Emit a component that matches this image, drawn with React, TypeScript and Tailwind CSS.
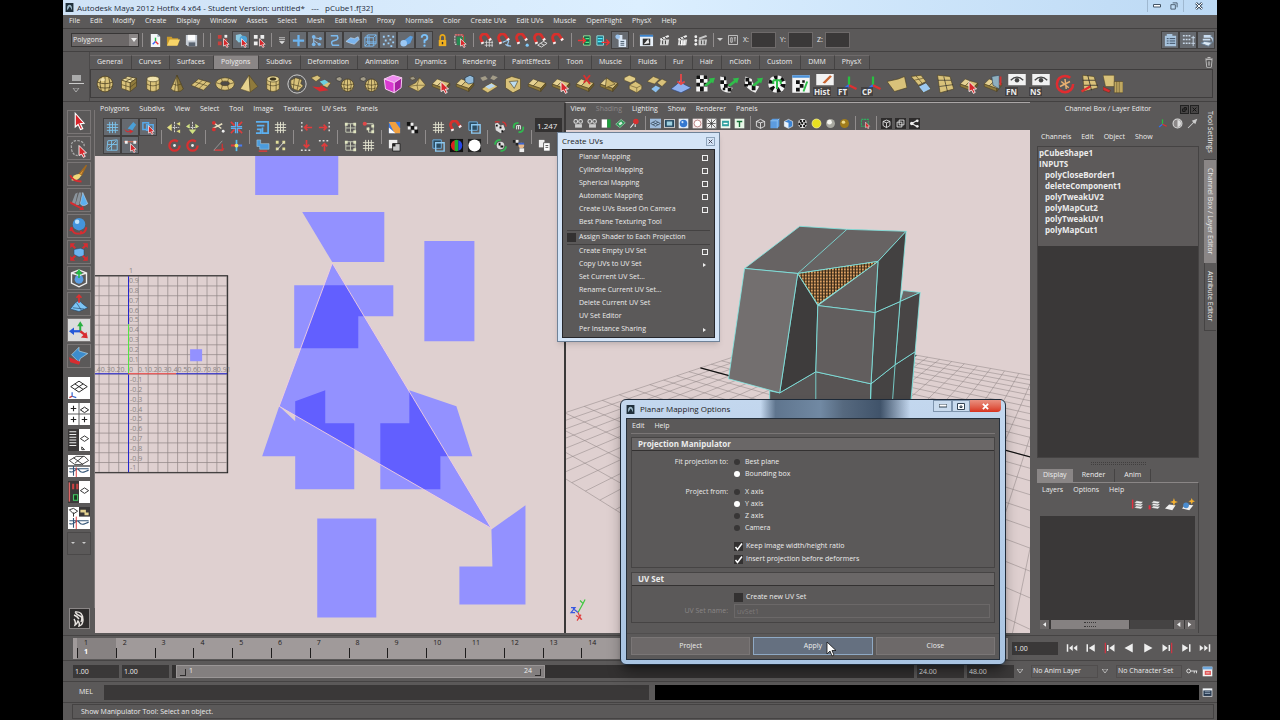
import React from 'react';
import clsx from 'clsx';

const GOLD = '#d9c27a';
const DARK_GOLD = '#8f7a3c';
const EDGE = '#4a3e20';

// Small drawings, all on a 16x16 grid
const redCursor = <path d="M8 6l6 6-2.500.2 1.500 2.500-1.500.8-1.400-2.600L8 14z" fill="#d8282c" stroke="#fff" strokeWidth=".7" />;
const tiles = (
  <g stroke={EDGE} strokeWidth=".4">
    <path d="M1 8l4-4 4 1.500-4 4z" fill="#e6d292" />
    <path d="M9 5.500l6 1.700-4 4.300-6-2z" fill={GOLD} />
    <path d="M1 8l4 1.500 6 2V14L1 10z" fill={DARK_GOLD} />
    <path d="M11 11.500l4-4.300v2L11 14z" fill="#6e5c2a" />
  </g>
);
const checker = (
  <g>
    <path d="M1 1h9v13H1z" fill="#f4f4f4" />
    <path d="M1 1h3v3H1zM7 1h3v3H7zM4 4h3v3H4zM1 7h3v3H1zM7 7h3v3H7zM4 10h3v4H4z" fill="#111" />
  </g>
);
const greenArrow = <path d="M7 9l5-4-1-1.500 5-.5-1.500 4.500-1-1L9 10z" fill="#2fbf4a" />;
const magnet = (
  <g fill="none">
    <path d="M4 11L2 6.500A4 4 0 0 1 9.500 3.500l3 4" stroke="#d8302c" strokeWidth="3" />
    <path d="M3.300 9.600l.8 2M11.200 6l1.300 1.900" stroke="#eee" strokeWidth="3" />
  </g>
);
const axes = (
  <g fill="none" strokeWidth="1.800">
    <path d="M8 9V2" stroke="#28c040" />
    <path d="M8 9l-5 4" stroke="#3070f0" />
    <path d="M8 9l6 3" stroke="#e03030" />
  </g>
);
const clap = (
  <g>
    <path d="M4 7h9l-1 6H3z" fill="#d8d8d8" />
    <path d="M3 6l9-4 1 2-9 4z" fill="#eee" />
    <path d="M5 5.200l2 1.400M8 3.900l2 1.400M6 8v4M9 8v4" stroke="#333" />
  </g>
);
const grid = <path d="M5 2v12M8 2v12M11 2v12M2 5h12M2 8h12M2 11h12" fill="none" />;
const globe = (
  <g>
    <circle cx="8" cy="8" r="6.300" fill={GOLD} stroke={EDGE} strokeWidth=".6" />
    <path d="M2 6.500q6 2.500 12 0M2 10q6 2.500 12 0M8 1.700v12.600M5 2.500q-2 5.500 0 11M11 2.500q2 5.500 0 11" fill="none" stroke={EDGE} strokeWidth=".6" />
    <ellipse cx="6" cy="4.500" rx="2" ry="1.300" fill="#f6e9b8" opacity=".8" />
  </g>
);
const smallGlobe = (
  <g>
    <path d="M1 3l3-1 2 2-2 2-3-1z" fill="#a39c88" stroke="#333" strokeWidth=".5" />
    <circle cx="10" cy="9" r="5" fill={GOLD} stroke={EDGE} strokeWidth=".6" />
    <path d="M5 8q5 2 10 0M5.500 11q5 2 9 0M10 4v10M8 4.500q-2 4.500 0 9M12 4.500q2 4.500 0 9" fill="none" stroke={EDGE} strokeWidth=".5" />
  </g>
);
const persp = (
  <g fill="none" stroke="#222" strokeWidth=".7">
    <path d="M2 7l6-4 6 4-6 4zM5 5l6 4M11 5L5 9" />
  </g>
);
const wave = <path d="M1 10h14M4 8v7M1 12c4 2 5-4 7-1s4 1 7 0" fill="none" stroke="#357" strokeWidth=".8" />;
const stack = (
  <g fill="#eee" stroke="#555" strokeWidth=".5">
    <path d="M4 12l3-2.500 8 1-3 3zM4 9l3-2.500 8 1-3 3zM4 6l3-2.500 8 1-3 3z" />
  </g>
);

const icons: Record<string, React.ReactNode> = {
  newScene: <><path d="M3 1h7l3 3v11H3z" fill="#f4f6f8" /><path d="M10 1v3h3" fill="#9ab" /><path d="M8 9V5" stroke="#2b4" strokeWidth="1.500" /><path d="M8 9l-3 3" stroke="#36f" strokeWidth="1.500" /><path d="M8 9l3 3" stroke="#e33" strokeWidth="1.500" /></>,
  open: <><path d="M1 4h5l1 1.500h6V13H1z" fill="#c99a2c" /><path d="M4 7h11l-3 6.500H1z" fill="#f7d468" /></>,
  save: <><path d="M2 2h12v12H4l-2-2z" fill="#c6ccd4" /><path d="M4 2h8v6H4z" fill="#fff" /><path d="M5 10h7v4H5z" fill="#5b6470" /></>,
  hier: <><path d="M2 2h4v4H2zM2 9h4v4H2zM9 6h3v3H9z" fill="#c8403c" /><path d="M9 2h3v3H9z" fill="#eee" />{redCursor}</>,
  object: <><path d="M2 2l5-1 3 3v5l-5 1-3-3z" fill="#8cc8e0" /><circle cx="10" cy="7" r="4" fill="#4da3d8" />{redCursor}</>,
  component: <><path d="M2 2h4v4H2zM9 2h4v4H9zM2 9h4v4H2z" fill="#eee" />{redCursor}</>,
  funnel: <path d="M4 5h8M4 7.500h8M5 10h6l-3 3z" fill="#ddd" stroke="#ddd" />,
  plus: <path d="M8 2v12M2 8h12" stroke="#6cb4f0" strokeWidth="2.400" />,
  joint: <><path d="M5 5l6 1M5 5v7M5 8l6 4" stroke="#9cc8f0" fill="none" /><circle cx="5" cy="4" r="2" fill="#7bb8ec" /><circle cx="12" cy="6" r="1.700" fill="#7bb8ec" /><circle cx="5" cy="12" r="2" fill="#7bb8ec" /><circle cx="11" cy="12" r="1.700" fill="#7bb8ec" /></>,
  curve: <path d="M4 3h7q2 4-3 5t-2 5h7" fill="none" stroke="#7bb8ec" strokeWidth="1.600" />,
  surface: <path d="M1 9l5-4 4 1 4-2 1 3-5 5-4-1z" fill="#7ab4ee" stroke="#cfe4fa" strokeWidth=".6" />,
  lattice: <path d="M2 5h9v9H2zM5 2h9v9H5zM2 5l3-3M11 5l3-3M11 14l3-3M2 14l3-3M6.500 3v11M3 9.500h11" fill="none" stroke="#7bb8ec" />,
  dots: <path d="M2 3h2v2H2zM7 2h2v2H7zM12 3h2v2h-2zM4 7h2v2H4zM9 6h2v2H9zM2 11h2v2H2zM7 10h2v2H7zM12 9h2v2h-2zM10 13h2v2h-2z" fill="#9cd0fa" />,
  render: <><path d="M4 9l8-6 3 1-3 7-7 3z" fill="#5a9ee0" /><circle cx="5" cy="11" r="3.500" fill="#9cc8f4" /></>,
  question: <><path d="M5 5q0-3 3-3t3 3q0 2-3 3v3" fill="none" stroke="#7bc0f8" strokeWidth="2" /><circle cx="8" cy="13.500" r="1.200" fill="#7bc0f8" /></>,
  lock: <><path d="M5.500 8V5q0-3 2.500-3t2.500 3v3" fill="none" stroke="#e8a818" strokeWidth="1.700" /><path d="M4 7.500h8V14H4z" fill="#f0b020" /><path d="M8 9.500v2.500" stroke="#333" strokeWidth="1.500" /></>,
  highlight: <><path d="M2 2h8v10H2z" fill="none" stroke="#eee" strokeDasharray="2 1" /><path d="M4 4h9v9H4z" fill="#268a52" /><path d="M2 2h9v9" fill="none" stroke="#e04040" />{redCursor}</>,
  snapGrid: <>{magnet}<path d="M8 8v7M11 8v7M14 8v7M6 10h9M6 13h9" stroke="#ddd" strokeWidth=".8" /></>,
  snapCurve: <>{magnet}<path d="M6 10q8-4 6 0t3 4q-4 0-6-2" fill="none" stroke="#9cc8f0" strokeWidth="1.200" /></>,
  snapPoint: <>{magnet}<circle cx="13" cy="13" r="1.700" fill="#7fc8f8" /></>,
  snapPlane: <>{magnet}<path d="M5 13l6-4 4 2-6 4zM8 11l4 2" fill="none" stroke="#ddd" /></>,
  magnet,
  inConn: <><path d="M7 3h7v10H7z" fill="#164" stroke="#9d9" /><path d="M1 8h8M6 5l3 3-3 3" stroke="#e33" strokeWidth="1.500" fill="none" /><path d="M9 6h4M9 10h4" stroke="#5e8" strokeWidth="1.500" /></>,
  outConn: <><path d="M2 3h7v10H2z" fill="#157a8a" stroke="#9dd" /><path d="M3 6h5M3 9h5" stroke="#5ef" strokeWidth="1.500" /><path d="M7 10h8M12 7l3 3-3 3" stroke="#e33" strokeWidth="1.500" fill="none" /></>,
  history: <><path d="M5 2h5v5H5zM6 7h8v8H6z" fill="#dbe8f6" /><circle cx="5" cy="4" r="2.500" fill="#9cc4ee" /><path d="M8 9h4M8 11h4M8 13h4" stroke="#456" /></>,
  renderView: <><path d="M1 2h14v12H1z" fill="#e8f0f8" /><path d="M1 2h14v2H1z" fill="#3a82cc" /><path d="M4 6h8v7H4z" fill="#333" /><path d="M5 12l5-6 1 5z" fill="#eee" /></>,
  clap,
  ipr: <>{clap}<path d="M7 8v5M9.500 8v5" stroke="#fff" strokeWidth="1.500" /></>,
  renderSet: <><circle cx="3" cy="4" r="1.500" fill="#eee" /><circle cx="3" cy="8" r="1.500" fill="#eee" /><circle cx="3" cy="12" r="1.500" fill="#eee" /><path d="M6 7h9l-1 6H6zM6 5l8-3 1 2-8 3z" fill="#c8c8c8" /><path d="M9 8v4M12 8v4" stroke="#444" /></>,
  entry: <path d="M2 2h12v12H2zM5 5h2v6H5zM9 5h3M10.500 5v5" fill="none" stroke="#ddd" />,
  attrEd: <><path d="M4 1h6v3H4zM2 3h12v11H2z" fill="#a8c4de" /><path d="M4 6h2M7 6h6M4 8.500h2M7 8.500h6M4 11h2M7 11h6" stroke="#36485c" /></>,
  toolSet: <><path d="M2 3h8M2 7h8M2 11h8" stroke="#c8d8e8" strokeWidth="1.500" strokeDasharray="2 1" /><path d="M13 3v11M11 5h4M11 11h4" stroke="#c8d8e8" /></>,
  chanBox: <><path d="M5 2h8v3H5zM4 6h8v2H4z" fill="#c8dcf0" /><path d="M2 11l4-2 8 1-4 4zM12 3l3 2v5" fill="#dbe8f4" stroke="#67809a" /></>,
  trash: <><path d="M4 5h8l-1 10H5z" fill="#3c3a3a" stroke="#ddd" /><path d="M3 4h10M6 2h4M7 7v6M9 7v6" stroke="#ddd" /></>,
  // shelf
  sphere: globe,
  cube: <g stroke={EDGE} strokeWidth=".5"><path d="M2 5l5-3 7 1.500L9 7z" fill="#eddc9e" /><path d="M2 5l7 2v7l-7-2.500z" fill={GOLD} /><path d="M9 7l5-3.500V10L9 14z" fill={DARK_GOLD} /><path d="M5.500 6v7M2 8.500l7 2 5-4M4.500 3.500L11 5M11 2.700L5.500 6" fill="none" /></g>,
  cyl: <g stroke={EDGE} strokeWidth=".5"><path d="M3 4v8q5 4 10 0V4z" fill={GOLD} /><ellipse cx="8" cy="4" rx="5" ry="2.200" fill="#f0e2ac" /><path d="M3 8q5 3 10 0M6 6v8M10.500 6v8" fill="none" /></g>,
  cone: <g stroke={EDGE} strokeWidth=".5"><path d="M8 1l5 11q-5 4-10 0z" fill={GOLD} /><path d="M8 1l5 11q-2 2-4 2z" fill={DARK_GOLD} /><path d="M8 1L6 14M4.500 8q3.500 2 7 0" fill="none" /></g>,
  plane: <g stroke={EDGE} strokeWidth=".5"><path d="M0 9l6-5 10 3-6 6z" fill={GOLD} /><path d="M3.300 6.400L13 9.500M3 10.200L9.200 5M6.500 11.500L12.500 6" fill="none" /></g>,
  torus: <g stroke={EDGE} strokeWidth=".5"><ellipse cx="8" cy="8" rx="7.500" ry="5" fill={GOLD} /><ellipse cx="8" cy="7.500" rx="3.500" ry="1.800" fill="#4d4a48" /><path d="M1 7l3.500 1M15 7l-3.500 1M5 3.500l1 2.500M11 3.500l-1 2.500M5 12.500l1-3.500M11 12.500l-1-3.500" /></g>,
  pyramid: <g stroke={EDGE} strokeWidth=".4"><path d="M8 1L1 12l8 2.500z" fill="#e6d28e" /><path d="M8 1l7 9-6 4.500z" fill={DARK_GOLD} /></g>,
  pipe: <g stroke={EDGE} strokeWidth=".5"><path d="M3 4v8q5 4 10 0V4z" fill={GOLD} /><ellipse cx="8" cy="4" rx="5" ry="2.400" fill="#e9d898" /><ellipse cx="8" cy="4" rx="2.500" ry="1" fill="#3a3520" /><path d="M3 8q5 3 10 0M6 6v8M10.500 6v8" fill="none" /></g>,
  subdiv: <><circle cx="8" cy="8" r="7.300" fill="#555" stroke="#ccc" strokeWidth=".8" /><path d="M3 5l4-2 5 1.500-1 3 2 2-4 4-5-2-1-3z" fill={GOLD} stroke={EDGE} strokeWidth=".5" /><path d="M3 8l8 2M6 3l-1 9M10 4l-2 9" stroke={EDGE} strokeWidth=".5" /></>,
  combine: <><path d="M0 3l5-2 3 2-4 3zM9 9l3-3 4 1-3 4z" fill={GOLD} stroke={EDGE} strokeWidth=".4" /><path d="M7 6l4-1.500 3 2-4 2.500z" fill="#6cd0e0" /><path d="M1 10l6 4 7-1-6-4-1 1.500z" fill="#d82c30" /></>,
  smooth1: smallGlobe,
  magenta: <g stroke="#f5c8f0" strokeWidth=".8"><path d="M1 4l7-3 7 2-6 4z" fill="#f08cf0" /><path d="M1 4l8 3v8l-7-3z" fill="#d838d0" /><path d="M9 7l6-4-.5 8L9 15z" fill="#a820a4" /></g>,
  wedge: <g stroke={EDGE} strokeWidth=".4"><path d="M1 10l6-3 3-4 5 6-6 5z" fill={GOLD} /><path d="M10 3l-2 6 7 0M1 10l7-1 1 5" fill="none" /><path d="M2 3l3-1 2 2-3 1z" fill="#a39c88" /></g>,
  tilesCursor: <>{tiles}{redCursor}</>,
  extrude: <>{tiles}<path d="M8 3l4-2 3 1.500V7L11 8 8 6z" fill="#8fb8d8" stroke="#234" strokeWidth=".5" /></>,
  bridge: <><path d="M1 3l4-1.500L7 4 3 5.500zM11 1l4 1.500L12 5 9 3.500z" fill="#a39c88" /><path d="M2 12l8-5 5 3-8 5z" fill={GOLD} stroke={EDGE} strokeWidth=".4" /><path d="M5 10l5-2.500 3 2-5 2.500z" fill="#b8d8f0" /></>,
  append: <g stroke={EDGE} strokeWidth=".5"><path d="M2 4l5-2 7 2v8l-6 3-6-4z" fill={GOLD} /><path d="M5 6l7-.5-3 6z" fill="#bcdcf0" /></g>,
  tiles,
  tilesRed: <>{tiles}<path d="M7 1l5 7M12 1L7 7" stroke="#d83030" strokeWidth="1.500" /></>,
  wedge2: <>{tiles}<path d="M6 3l7 5-8 3z" fill="#cdb468" stroke={EDGE} strokeWidth=".5" /></>,
  blocks: <g stroke={EDGE} strokeWidth=".4"><path d="M1 3l4-2 5 2v2L6 7 1 5z" fill="#e0cc88" /><path d="M5 9l5-3 5 3v3l-4 3-6-3z" fill={GOLD} /><path d="M5 9l6 2v4M11 11l4-2" fill="none" /></g>,
  planes: <g stroke={EDGE} strokeWidth=".4"><path d="M0 6l5-4 5 2-4 4zM8 7l4-3 4 2-4 4z" fill={GOLD} /><path d="M3 12l4-3 4 2-4 4z" fill="#8cc0f0" /></g>,
  sculpt: <><path d="M0 12l5-4 3-5 2 5 6 3-8 4z" fill="#8fb0ee" stroke="#2d4780" strokeWidth=".5" /><path d="M8 0v8M5 6l3 2 3-2" stroke="#e04848" strokeWidth="1.500" fill="none" /></>,
  uvPlanar: <>{checker}{greenArrow}</>,
  uvCyl: <><path d="M1 2q3 1 5 0v6q1 3 5 3l-2 4q-8 0-8-6z" fill="#f4f4f4" /><path d="M1 5h3v3H1zM4 2h2v3H4zM4 8h3v3H4zM7 11h3v3H7zM3 11h2v2H3z" fill="#111" />{greenArrow}</>,
  uvSphere: <><path d="M2 2q-3 9 8 13l3-5q-6-1-6-6z" fill="#f4f4f4" /><path d="M2 3h3v3H2zM4 6h3v3H4zM1 8h3v2H1zM7 9h3v4H7z" fill="#111" />{greenArrow}</>,
  uvAuto: <><circle cx="8" cy="8" r="7" fill="#f4f4f4" /><circle cx="8" cy="8" r="5" fill="none" stroke="#111" strokeWidth="4" strokeDasharray="2.600 2.600" /><path d="M8 12V5M5 5h6M11 5v3M5 5v3" stroke="#2fbf4a" strokeWidth="1.600" fill="none" /></>,
  uvEditor: <><path d="M1 1h14v14H1z" fill="#f4f4f4" /><path d="M1 1h14v2H1z" fill="#4a90d8" /><path d="M4 5h3v3H4zM7 8h3v3H7zM4 11h3v3H4zM9 5h2v2H9z" fill="#111" /><path d="M10 14l3-8" stroke="#2fbf4a" strokeWidth="1.500" /></>,
  hist: <><path d="M1 0h14v9H1z" fill="#f2f2f2" /><path d="M6 7l6-6 1.500 1L8 7.500z" fill="#c86432" /></>,
  axes,
  quad: <path d="M0 6l9-2 5-2 2 9-10 3z" fill={GOLD} stroke={EDGE} strokeWidth=".5" />,
  quads: <g stroke={EDGE} strokeWidth=".5"><path d="M0 2l8-1 4 5-6 3z" fill={GOLD} /><path d="M6 10l6-3 4 5-6 3z" fill="#9cc8f0" /><path d="M4 1.500l5 6M2.500 5l7-1.500" /></g>,
  split: <g stroke={EDGE} strokeWidth=".5"><path d="M2 1l10 1 3 10-11 3z" fill={GOLD} /><path d="M7 2l3 12M2.500 5l10.500 0M3.500 10l11-1.500" stroke="#222" /></g>,
  mirror: <>{tiles}<path d="M7 2l6-1v11l-5-3z" fill="#8fb0c0" stroke="#345" strokeWidth=".5" /><path d="M14 2v7" stroke="#d83030" strokeWidth="1.500" /></>,
  eye: <><path d="M1 0h14v9H1z" fill="#f2f2f2" /><path d="M3 5q5-5 10 0" fill="none" stroke="#444" /><circle cx="8" cy="5" r="1.800" fill="#444" /></>,
  noRotate: <><circle cx="8" cy="8" r="6.500" fill="none" stroke="#e02c30" strokeWidth="2" strokeDasharray="35 6" /><path d="M4 10l8-4M8 4l1 8M5 6l6 5" stroke="#e8b070" strokeWidth="1.200" /></>,
  splitRed: <><path d="M3 1l9 1 3 9-11 3z" fill={GOLD} stroke={EDGE} strokeWidth=".5" /><path d="M7 1l3 12M3 5h10M4 9h11" stroke="#222" strokeWidth=".6" /><path d="M2 14l7-4" stroke="#e03030" strokeWidth="1.800" /></>,
  pipes: <g stroke={EDGE} strokeWidth=".4"><path d="M0 1h9v9H2z" fill={GOLD} /><path d="M9 6h7v9H9z" fill="#c0a860" /><path d="M11 6v9M13 6v9" /><path d="M0 10l6 3-1 2-5-2z" fill="#d82c30" /></g>,
  // toolbox
  select: <path d="M5 1l7 8-3 .3 2 4-1.800.8L7.300 10 5 12z" fill="#d8242a" stroke="#fff" strokeWidth=".9" />,
  lasso: <><path d="M2 8q-1-6 5-6 6 1 5 5M2 9q1 5 5 5" fill="none" stroke="#aaa" strokeDasharray="2 1" />{redCursor}</>,
  paint: <><path d="M14 1L8 8l2 1z" fill="#e0a040" stroke="#a06820" /><path d="M8 8q-5 0-6 5 5 1 8-4z" fill="#f0d878" /><path d="M1 9q2 5 9 5" fill="none" stroke="#d82c30" strokeWidth="1.500" /></>,
  move: <><path d="M5 3l2-1-2 9H2zM8 2l2 0-2 10H5z" fill="#8a949c" /><path d="M11 2l4 9q-4 3-6 0z" fill="#5cb0f0" stroke="#cde" strokeWidth=".4" /><path d="M1 9l9 5 1-1.500 1 3.500H8l1-1-8-4z" fill="#d82c30" /></>,
  rotate: <><circle cx="8" cy="6.500" r="5" fill="#4494dc" /><circle cx="6.500" cy="4.500" r="1.800" fill="#bfe2fa" /><path d="M2 9q1 6 6 5M14 9q-1 5-5 5l1-2M2 9l-1 3" fill="none" stroke="#d82c30" strokeWidth="1.500" /></>,
  scale: <><path d="M4 6l5-1 3 1v5l-4 1-4-2z" fill="#6cb4f0" stroke="#246" strokeWidth=".4" /><path d="M5 5L2 2M11 5l3-3M5 11l-3 3M11 11l3 3" stroke="#d82c30" strokeWidth="1.600" /><path d="M1 1h4L1 5zM15 1h-4l4 4zM1 15h4l-4-4zM15 15h-4l4-4z" fill="#d82c30" /></>,
  universal: <><circle cx="8" cy="9" r="3.500" fill="#5a9ee4" /><path d="M2 4l6-2.500L14 4v8l-6 3-6-3zM2 4l6 2 6-2" fill="none" stroke="#eee" strokeWidth="1.100" /><path d="M8 8V3M6 5l2-3 2 3" stroke="#2b4" strokeWidth="1.300" fill="none" /></>,
  soft: <><path d="M1 12l4-5 3-2 3 3 4 3-7 3z" fill="#7cc4f4" stroke="#246" strokeWidth=".5" /><path d="M3 11l9 1M6 7l4 6" stroke="#246" strokeWidth=".5" /><path d="M8 7V1M6 3l2-2 2 2" stroke="#e03030" strokeWidth="1.400" fill="none" /></>,
  manip: <><path d="M9 9V4" stroke="#28b040" strokeWidth="1.600" /><path d="M6.500 5L9 1l2.500 4z" fill="#28b040" /><path d="M9 9H3" stroke="#2458d8" strokeWidth="1.800" /><path d="M4 6v6L0 9z" fill="#2458d8" /><path d="M9 9l4 3" stroke="#d82c30" strokeWidth="1.800" /><path d="M14 9.500l1 5-5.500-.5z" fill="#d82c30" /></>,
  lastTool: <><path d="M2 7l6-6v3l7 2-6 4-1 3z" fill="#3c8ccc" stroke="#bde" strokeWidth=".5" /><path d="M0 9l9 3.500-1 2.500-7-2z" fill="#d82c30" /></>,
  layPersp: <><path d="M0 0h16v16H0z" fill="#fff" />{persp}<path d="M3 14v-3M3 14l3 1" stroke="#36c" strokeWidth=".9" /><path d="M3 14l-2 1" stroke="#c33" /></>,
  layFour: <><path d="M0 0h16v16H0z" fill="#fff" /><path d="M8 0v16M0 8h16" stroke="#555" strokeWidth=".7" /><path d="M4 2v4M2 4h4M4 10v4M2 12h4M12 10v4M10 12h4" stroke="#222" strokeWidth=".8" /><path d="M9 5l3-2 3 2-3 2z" fill="none" stroke="#222" strokeWidth=".7" /></>,
  layOut: <><path d="M0 0h8v16H0z" fill="#3a3838" /><path d="M8 0h8v16H8z" fill="#fff" /><path d="M1 2h5M1 4h5M1 6h5M1 8h5M1 10h5M1 12h5" stroke="#eee" strokeWidth=".8" /><path d="M9 7l3-2 3 2-3 2zM10 15v-2l2 2z" fill="none" stroke="#333" strokeWidth=".7" /></>,
  layGraph: <><path d="M0 0h16v16H0z" fill="#fff" /><path d="M1 4l5-3h6l3 3-5 3H5zM4 2l7 5M11 1L5 6" fill="none" stroke="#222" strokeWidth=".6" /><path d="M0 8h16" stroke="#444" />{wave}<path d="M6 9v7" stroke="#d33" strokeWidth=".7" /></>,
  layHyper: <><path d="M0 0h8v16H0z" fill="#3a3838" /><path d="M8 0h8v16H8z" fill="#fff" /><path d="M1 1v14" stroke="#d66" /><path d="M3 2h1.500v4H3zM6 2h1.500v4H6z" fill="#c44" /><path d="M4 10h3v4H4z" fill="#1a3a20" stroke="#4c6" strokeWidth=".8" /><path d="M9 7l3-2 3 2-3 2z" fill="none" stroke="#333" strokeWidth=".7" /></>,
  layPerspGraph: <><path d="M0 0h16v16H0z" fill="#fff" /><path d="M8 0h8v7H8z" fill="#3a3838" /><path d="M9 2h4v2H9zM12 4h3v2h-3z" fill="#e4d290" /><path d="M1 2l3-1 3 2-3 2zM4 4v3" fill="none" stroke="#333" strokeWidth=".7" />{wave}<path d="M6 7v9" stroke="#d33" strokeWidth=".7" /></>,
  // UV texture editor
  uvGrid: <g stroke="#7cc4ee">{grid}</g>,
  uvGridW: <g stroke="#e4e4d0">{grid}</g>,
  uvSmooth: <><path d="M5 9l6-7 3 3-4 6z" fill="#4aa0d8" /><path d="M1 9q2 5 7 4l-1 2 4-3-4-2v2q-4 0-6-3z" fill="#d82c30" /></>,
  uvShell: <><path d="M2 3h6v7H2zM6 5h7v6H6z" fill="none" stroke="#58a8e8" strokeWidth="1.600" />{redCursor}</>,
  uvLattice: <path d="M3 3l10-1v11H2zM3 7h10M7 3v10M3 12l9-9" fill="none" stroke="#7cc4ee" />,
  uvPick: <><path d="M1 4h14" stroke="#e87058" /><path d="M2 3h3v3H2zM11 3h3v3h-3z" fill="#eee" />{redCursor}</>,
  uvFlip: <><path d="M8 2v12M3 8h10" stroke="#ddd" strokeDasharray="2 1" /><path d="M5 4L0 8l5 4zM10 4l4-2v4zM10 12l4 2v-4z" fill="#e0dc80" /></>,
  uvFlip2: <><path d="M8 2v12M3 8h10" stroke="#ddd" strokeDasharray="2 1" /><path d="M4 10h8l-4 5zM1 7l4-3v5zM15 7l-4-3v5z" fill="#cfe080" /></>,
  ccw: <><circle cx="8" cy="8" r="5.500" fill="none" stroke="#d83030" strokeWidth="2.400" strokeDasharray="29 6" /><circle cx="8" cy="8" r="1.500" fill="#eee" /></>,
  cut: <><path d="M3 3l8 6M2 9l10-5" stroke="#e8e0c0" strokeWidth="1.500" /><circle cx="3" cy="3" r="2" fill="#d83030" /><circle cx="3" cy="10" r="2" fill="#d83030" /><circle cx="13" cy="12" r="1.500" fill="#eee" /></>,
  sew: <><path d="M7 2v5H2M9 2v5h5M7 14V9H2M9 14V9h5" stroke="#60b0f0" strokeWidth="1.400" fill="none" /><path d="M2 2l4 4M14 2l-4 4M2 14l4-4M14 14l-4-4" stroke="#e03c3c" strokeWidth="1.600" /></>,
  unfold: <><path d="M3 13L12 3M3 13h10" stroke="#999" /><path d="M12 6v7l2-2M4 13h8" stroke="#d83030" strokeWidth="1.300" fill="none" /></>,
  moveSew: <><path d="M8 2v12" stroke="#58c0f0" strokeWidth="1.800" /><path d="M2 8h6" stroke="#e03c3c" strokeWidth="2.200" /><path d="M9 8h5" stroke="#4a7cf0" strokeWidth="2.200" /><circle cx="8" cy="8" r="2" fill="#f0e060" /></>,
  layout: <path d="M1 2h13v12H8V8M2 6h8M2 10h4v4H1" fill="none" stroke="#5cb0f0" strokeWidth="1.800" />,
  uvBlocks: <><path d="M2 2h4v4h9v6H5V9H2z" fill="#4c9cdc" stroke="#bde" strokeWidth=".5" /><path d="M4 14h9" stroke="#e03c3c" strokeWidth="1.500" /></>,
  straight: <><path d="M3 3h3v3H3zM10 10h3v3h-3zM10 3h3v3h-3zM3 10h3v3H3z" fill="#e0dc98" /><path d="M4 13L12 4" stroke="#ddd" /></>,
  alignL: <><path d="M3 2v12" stroke="#ddd" strokeDasharray="2 2" strokeWidth="1.500" /><path d="M14 8H6M9 5L6 8l3 3" stroke="#e03c3c" strokeWidth="1.800" fill="none" /></>,
  alignR: <><path d="M13 2v12" stroke="#ddd" strokeDasharray="2 2" strokeWidth="1.500" /><path d="M2 8h8M7 5l3 3-3 3" stroke="#e03c3c" strokeWidth="1.800" fill="none" /></>,
  alignB: <><path d="M2 13h12" stroke="#ddd" strokeDasharray="2 2" strokeWidth="1.500" /><path d="M8 2v8M5 7l3 3 3-3" stroke="#e03c3c" strokeWidth="1.800" fill="none" /></>,
  alignT: <><path d="M2 3h12" stroke="#ddd" strokeDasharray="2 2" strokeWidth="1.500" /><path d="M8 14V6M5 9l3-3 3 3" stroke="#e03c3c" strokeWidth="1.800" fill="none" /></>,
  iso: <><path d="M3 4h10v9H3zM8 4v9M3 8.500h10" fill="none" stroke="#c8ccb8" /><path d="M2 3h3v3H2zM11 3h3v3h-3zM11 11h3v3h-3z" fill="#e0e4c0" /></>,
  isoRed: <><path d="M4 4h9v9H8V8" fill="none" stroke="#c8ccb8" /><circle cx="4" cy="4" r="2.200" fill="#e04848" /><path d="M11 11h3v3h-3zM6 8h3v3H6zM11 5h3v3h-3z" fill="#e0e4c0" /></>,
  image: <><path d="M2 2h12v12H2z" fill="#3c78e0" /><path d="M2 2h7l5 7v5H8z" fill="#f0a040" /><path d="M2 8l7 6H2z" fill="#fff" /></>,
  imageBW: <><path d="M2 2h9v9H2z" fill="#eee" /><path d="M6 6h8v8H6z" fill="#c8c8c8" stroke="#222" /><path d="M6 6h3v3H6z" fill="#222" /></>,
  checkDots: <><path d="M2 2h4v4H2zM6 6h4v4H6zM10 10h4v4h-4z" fill="#111" /><path d="M6 3h3v3H6zM3 7h3v3H3zM10 7h3v3h-3zM7 11h3v3H7z" fill="#eee" /></>,
  overlap: <><path d="M2 2h9v9H2z" fill="#2c4c60" stroke="#70b0e0" /><path d="M5 5h9v9H5z" fill="none" stroke="#8cc8f0" strokeWidth="1.500" /></>,
  rgb: <><path d="M1 1h14v14H1z" fill="#111" /><path d="M8 2a6 6 0 0 0 0 12z" fill="#e02020" /><path d="M6 2.300a6 6 0 0 1 4 0v11.400a6 6 0 0 1-4 0z" fill="#20b030" /><path d="M10 2.300a6 6 0 0 1 0 11.400z" fill="#2848e8" /></>,
  white: <><path d="M1 1h14v14H1z" fill="#222" /><circle cx="8" cy="8" r="6.500" fill="#fff" /></>,
  bake: <><path d="M2 4l3-1 3 3 3-1 2 5-5 4-5-3z" fill="#ddd" /><path d="M3 5h2v2H3zM7 7h2v2H7zM9 11h2v2H9z" fill="#111" /><path d="M10 2q4 1 4 5M2 2h5" stroke="#d83030" strokeWidth="1.400" fill="none" /></>,
  refresh: <><path d="M3 9q-1-6 5-6M13 7q1 6-5 6" stroke="#30b850" strokeWidth="2" fill="none" /><path d="M6 10V6h4v4M8 6v4" stroke="#eee" fill="none" /></>,
  bake2: <><circle cx="8" cy="8" r="4" fill="#ddd" /><path d="M6 5h2v3H6zM8 8h3v2H8z" fill="#111" /><path d="M2 7q1-5 6-5M14 9q-1 5-6 5" stroke="#30b850" strokeWidth="2" fill="none" /></>,
  paintUV: <><path d="M2 2h3v3H2zM5 5h3v3H5z" fill="#222" /><path d="M5 2h3v3H5z" fill="#eee" /><circle cx="11" cy="8" r="3" fill="#e8b888" /><path d="M8 5h6v2H8z" fill="#3c64d0" /><path d="M9 11h5v4H9z" fill="#eee" /></>,
  copy: <><path d="M2 2h6v8H2z" fill="#eee" /><path d="M7 5h7v9H7z" fill="#fff" stroke="#444" strokeWidth=".8" /><path d="M9 8h3M9 10h3" stroke="#555" /></>,
  // panel bar
  camera: <><circle cx="4" cy="5" r="2.700" fill="#666" stroke="#ddd" strokeWidth="1.500" /><circle cx="11" cy="5" r="2.700" fill="#666" stroke="#ddd" strokeWidth="1.500" /><path d="M3 9h10v5H3z" fill="#ccc" /></>,
  bookmark: <><path d="M1 2h8v12H1z" fill="#fff" /><path d="M9 2h5v12H9z" fill="#1fa040" /></>,
  imgPlane: <><path d="M1 9l8-7 6 5-8 7z" fill="#2f9858" stroke="#9fd8b0" /><path d="M5 8l4-3 2 3-4 3z" fill="#d8f0e0" /></>,
  pin: <><circle cx="10" cy="5" r="4" fill="#d83030" /><path d="M7 8l-5 6M9 9v4" stroke="#eee" strokeWidth="1.500" /></>,
  pGrid: <><path d="M0 1h16v14H0z" fill="#9fbcdc" /><path d="M1 8l7-4 7 4-7 4zM4 6l8 4M12 6l-8 4" stroke="#345" fill="none" /></>,
  film: <><path d="M0 2h16v12H0z" fill="#fff" /><path d="M1 3h14v10H1z" fill="#234860" /><path d="M4 5h8v6H4z" fill="#9fd0e0" /></>,
  resGate: <><path d="M1 1h14v14H1z" fill="#e4eef8" /><circle cx="8" cy="8" r="5.500" fill="#3478d0" /><circle cx="6.500" cy="6" r="1.500" fill="#cfe4fa" /></>,
  maskGate: <><path d="M1 1h14v14H1z" fill="#f4e8e8" /><circle cx="8" cy="8" r="5" fill="#fff" stroke="#a05858" /></>,
  fieldChart: <><path d="M1 1h14v14H1z" fill="#eee" /><path d="M2 2l12 12M14 2L2 14M8 2v12M2 8h12" stroke="#333" /></>,
  safe: <><path d="M1 1h14v14H1z" fill="#eef8f0" /><path d="M3 4h10v8H3z" fill="#30a0a0" /><path d="M5 8h6" stroke="#fff" strokeWidth="2" /></>,
  safeT: <><path d="M1 1h14v14H1z" fill="#e8f8e8" /><path d="M4 4h8v2H9v7H7V6H4z" fill="#167038" /></>,
  wire: <path d="M2 5l6-3 6 3v7l-6 3-6-3zM2 5l6 2 6-2M8 7v8" fill="none" stroke="#eee" strokeWidth="1.200" />,
  shaded: <><path d="M2 4l3-3h10v11l-3 3H2z" fill="#5c9ce0" /><path d="M2 4h10v11M12 4l3-3" stroke="#9ccaf4" fill="none" /></>,
  shaded2: <><path d="M2 5l6-3 6 3v7l-6 3-6-3z" fill="#3c84d4" stroke="#eee" /><path d="M2 5l6 2v8l-6-3z" fill="#eaf2fa" /></>,
  checkBall: <><circle cx="8" cy="8" r="6.500" fill="#eee" /><path d="M4 3h3v3H4zM9 3h3v3H9zM6 6h3v3H6zM2 7h3v3H2zM11 7h3v3h-3zM4 10h3v3H4zM9 10h3v3H9z" fill="#111" /></>,
  ballY: <circle cx="8" cy="8" r="6.500" fill="#e8e020" stroke="#f8f4a0" />,
  ballW: <><circle cx="8" cy="8" r="6.500" fill="#a8a8a0" /><circle cx="6.500" cy="6" r="3.500" fill="#f6f6f0" /></>,
  ballG: <><circle cx="8" cy="8" r="6.500" fill="#a07c1c" /><circle cx="6.500" cy="6" r="2.500" fill="#f0dc88" /></>,
  isolate: <><path d="M2 2h10v10H2z" fill="none" stroke="#30b060" strokeDasharray="3 1" strokeWidth="1.500" />{redCursor}</>,
  xray: <><path d="M0 0h16v16H0z" fill="#2e2c2c" /><path d="M3 5l5-2 5 2v6l-5 3-5-3zM3 5l5 2 5-2M8 7v7" fill="none" stroke="#eee" strokeWidth="1.200" /></>,
  xrayJ: <><path d="M0 0h16v16H0z" fill="#2e2c2c" /><path d="M3 6h7v7H3zM6 3h7v7H6z" fill="none" stroke="#eee" strokeWidth="1.200" /></>,
  share: <><path d="M0 0h16v16H0z" fill="#2e2c2c" /><path d="M4 8l7-4M4 8l7 4" stroke="#eee" strokeWidth="1.500" /><circle cx="4" cy="8" r="2.500" fill="#eee" /><circle cx="12" cy="4" r="2" fill="#eee" /><circle cx="12" cy="12" r="2" fill="#eee" /></>,
  // right side and playback
  half: <><circle cx="8" cy="8" r="6.500" fill="#8c8888" stroke="#ddd" strokeWidth="1.500" /><path d="M8 3a5 5 0 0 1 0 10z" fill="#ddd" /></>,
  arrowNE: <path d="M1 14l8-8-2-2 8-3-3 8-2-2-8 8z" fill="#ccc" />,
  layUp: <>{stack}<path d="M2 2v11" stroke="#e03040" strokeWidth="1.800" /></>,
  layDown: <>{stack}<path d="M2 9v5" stroke="#e03040" strokeWidth="2.500" /></>,
  layNew: <><path d="M0 13l5-5 8 1-4 6z" fill="#f0f0f0" /><path d="M11 0l1.200 3.800L16 5l-3.800 1.200L11 10 9.800 6.200 6 5l3.800-1.200z" fill="#f4b030" /></>,
  layNewSel: <><path d="M0 13l4-5 10 1-5 6z" fill="#f0f0f0" /><circle cx="5" cy="9" r="3.500" fill="#4a8cd0" /><path d="M12 0l1.100 2.900L16 4l-2.900 1.100L12 8l-1.100-2.900L8 4l2.900-1.100z" fill="#f4b030" /></>,
  toStart: <path d="M1 3h2v10H1zM9 4v8L4 8zM15 4v8l-5-4z" fill="#eee" />,
  stepBack: <path d="M2 3h2v10H2zM13 3v10L5 8z" fill="#eee" />,
  keyBack: <><path d="M1 1h1.500v14H1z" fill="#e03040" /><path d="M4 4h2v8H4zM14 3v10L7 8z" fill="#eee" /></>,
  playBack: <path d="M13 2v12L2 8z" fill="#eee" />,
  play: <path d="M3 2v12l11-6z" fill="#eee" />,
  keyFwd: <><path d="M13.500 1H15v14h-1.500z" fill="#e03040" /><path d="M10 4h2v8h-2zM2 3v10l7-5z" fill="#eee" /></>,
  stepFwd: <path d="M12 3h2v10h-2zM3 3v10l8-5z" fill="#eee" />,
  toEnd: <path d="M13 3h2v10h-2zM1 4v8l5-4zM7 4v8l5-4z" fill="#eee" />,
  key: <path d="M1 8a2.500 2.500 0 1 0 5 0 2.500 2.500 0 1 0-5 0M6 8h9M14 8v3M11 8v3" fill="none" stroke="#ddd" strokeWidth="1.300" />,
  autoKey: <><path d="M1 1h14v14H1z" fill="#f4f4f4" /><path d="M1 1h14v4H1z" fill="#70a8dc" /><path d="M4 7h9v6H4z" fill="#e05858" /><path d="M6 10h5" stroke="#fff" /></>,
  script: <><path d="M1 2h14v12H1z" fill="#f2f6fa" /><path d="M2 5h12v8H2z" fill="#26384e" /><path d="M4 7h8M4 9.500h8" stroke="#bcd" /></>,
  maya: <path d="M4 1q8-1 8 8 0 5-4 6 1-3-1-5-1 3-3 4 1-3-1-6M4 1q2 3 5 4t1 6M3 4q3 1 5 4" fill="none" stroke="#e8e4e0" strokeWidth="1.400" />,
  logo: <><path d="M1 0h14v16H1z" fill="#20303c" /><path d="M4 13q-2-9 4-10 6 1 4 10-1-5-4-7-1 3-4 7" fill="#9cb8c8" /></>,
};

interface IconProps {
  name: string;
  className?: string;
}

const Icon: React.FC<IconProps> = ({ name, className = 'size-[15px]' }) => (
  <svg viewBox="0 0 16 16" className={clsx('block shrink-0', className)} aria-hidden="true">
    {icons[name]}
  </svg>
);

interface ToolButtonProps extends IconProps {
  pressed?: boolean;
  cell?: string;
}

const ToolButton: React.FC<ToolButtonProps> = ({ name, pressed, cell = 'size-[18px]', className }) => (
  <button
    type="button"
    aria-label={name}
    className={clsx('flex shrink-0 items-center justify-center', cell, pressed && 'border border-[#413f3f] bg-[#666a70]')}
  >
    <Icon name={name} className={className} />
  </button>
);

const Sep: React.FC<{ className?: string }> = ({ className = 'w-2' }) => (
  <span className={clsx('flex shrink-0 items-center justify-center self-stretch', className)}>
    <span className="h-[14px] w-px bg-[#918d8d]" />
  </span>
);

const Menu: React.FC<{ items: string[]; dim?: string; className?: string }> = ({ items, dim, className }) => (
  <nav className={clsx('flex shrink-0 items-center', className)}>
    {items.map((item) => (
      <button key={item} type="button" className={clsx('whitespace-nowrap', item === dim && 'text-[#8d8989]')}>
        {item}
      </button>
    ))}
  </nav>
);

const shelfTabs = ['General', 'Curves', 'Surfaces', 'Polygons', 'Subdivs', 'Deformation', 'Animation', 'Dynamics', 'Rendering', 'PaintEffects', 'Toon', 'Muscle', 'Fluids', 'Fur', 'Hair', 'nCloth', 'Custom', 'DMM', 'PhysX'];

const shelfItems: { icon: string; text?: string }[] = [
  ...['sphere', 'cube', 'cyl', 'cone', 'plane', 'torus', 'pyramid', 'pipe', 'subdiv', 'combine', 'smooth1', 'smooth1', 'magenta', 'wedge', 'tilesCursor', 'extrude', 'bridge', 'append', 'tiles', 'tilesCursor', 'tilesRed', 'wedge2', 'blocks', 'planes', 'sculpt', 'uvPlanar', 'uvCyl', 'uvSphere', 'uvAuto', 'uvEditor'].map((icon) => ({ icon })),
  { icon: 'hist', text: 'Hist' },
  { icon: 'axes', text: 'FT' },
  { icon: 'axes', text: 'CP' },
  { icon: 'quad' },
  { icon: 'quads' },
  { icon: 'split' },
  { icon: 'tilesCursor' },
  { icon: 'mirror' },
  { icon: 'eye', text: 'FN' },
  { icon: 'eye', text: 'NS' },
  { icon: 'noRotate' },
  { icon: 'splitRed' },
  { icon: 'pipes' },
];

const StatusLine = () => (
  <div className="flex h-[23px] shrink-0 items-center border-b border-[#434141] pl-2">
    <div className="grid w-[68px] items-center">
      <select aria-label="Menu set" className="col-start-1 row-start-1 h-[14px] appearance-none border border-[#383636] bg-[#6b6767] pl-px text-[7px] leading-[12px]">
        <option>Polygons</option>
      </select>
      <span className="pointer-events-none col-start-1 row-start-1 mr-px flex h-3 w-[9px] items-center justify-center justify-self-end bg-[#8b8787]">
        <svg viewBox="0 0 6 4" className="w-[6px]"><path d="M0 0h6L3 4z" fill="#eee" /></svg>
      </span>
    </div>
    <Sep className="w-[7px]" />
    {['newScene', 'open', 'save'].map((n) => <ToolButton key={n} name={n} />)}
    <Sep className="w-[7px]" />
    <Sep className="w-[7px]" />
    <ToolButton name="hier" />
    <ToolButton name="object" pressed />
    <ToolButton name="component" />
    <Sep className="w-[7px]" />
    <ToolButton name="funnel" cell="h-[18px] w-[14px]" className="size-3" />
    {['plus', 'joint', 'curve', 'surface', 'lattice', 'dots', 'render', 'question'].map((n) => <ToolButton key={n} name={n} pressed />)}
    <ToolButton name="lock" />
    <ToolButton name="highlight" />
    <Sep />
    {['snapGrid', 'snapCurve', 'snapPoint', 'snapPlane', 'magnet'].map((n) => <ToolButton key={n} name={n} />)}
    <Sep />
    <ToolButton name="inConn" />
    <ToolButton name="outConn" />
    <ToolButton name="history" pressed />
    <Sep />
    {['renderView', 'clap', 'ipr', 'renderSet'].map((n) => <ToolButton key={n} name={n} />)}
    <Sep />
    <svg viewBox="0 0 6 4" className="mr-1 w-[6px]"><path d="M0 0h6L3 3z" fill="#ccc" /></svg>
    <Icon name="entry" className="size-3" />
    {['X', 'Y', 'Z'].map((axis) => (
      <label key={axis} className="ml-1 flex items-center gap-px">
        <span className="w-[7px]">{axis}:</span>
        <input className="h-4 w-[25px] border border-[#6e6a6a] bg-[#3a3838]" />
      </label>
    ))}
    <div className="ml-auto flex pr-[2px]">
      {['attrEd', 'toolSet', 'chanBox'].map((n) => <ToolButton key={n} name={n} pressed />)}
    </div>
  </div>
);

const Shelf = () => (
  <div className="flex h-[50px] shrink-0 border-b border-[#434141]">
    <div className="flex w-[27px] shrink-0 flex-col items-center justify-end border-r border-[#4b4949] pb-2">
      <span className="mb-[2px] h-[6px] w-[9px] bg-[#aaa]" />
      <span className="h-px w-[15px] bg-[#ccc]" />
      <svg viewBox="0 0 8 5" className="mt-1 w-2"><path d="M1 0h6L4 4z" fill="none" stroke="#aaa" /></svg>
    </div>
    <div className="flex min-w-0 flex-1 flex-col">
      <div className="flex h-[17px] items-end">
        {shelfTabs.map((tab) => (
          <button
            key={tab}
            type="button"
            className={clsx('h-[14px] whitespace-nowrap border-r border-t border-[#454343] border-t-[#6f6b6b] pl-[7px] pr-2', tab === 'Polygons' && 'bg-[#8a8686]')}
          >
            {tab}
          </button>
        ))}
        <span className="ml-auto pb-px pr-[2px]"><Icon name="trash" className="size-3" /></span>
      </div>
      <div className="mb-[3px] mr-1 flex flex-1 items-center border border-[#3f3d3d] pl-[2px]">
        {shelfItems.map((item, i) => (
          <button key={i} type="button" aria-label={item.icon} className="grid h-6 w-6 shrink-0 place-items-center">
            <Icon name={item.icon} className="col-start-1 row-start-1 size-5" />
            {item.text && (
              <span className="col-start-1 row-start-1 self-end justify-self-start bg-[#3a3838]/70 px-px text-[8px] font-bold leading-[9px]">
                {item.text}
              </span>
            )}
          </button>
        ))}
      </div>
    </div>
  </div>
);

const tools = ['select', 'lasso', 'paint', 'move', 'rotate', 'scale', 'universal', 'soft', 'manip', 'lastTool'];
const layouts = ['layPersp', 'layFour', 'layOut', 'layGraph', 'layHyper', 'layPerspGraph'];

const ToolBox = () => (
  <aside className="flex w-8 shrink-0 flex-col items-center pt-2">
    <div className="flex flex-1 flex-col gap-[2px] border-r border-[#7a7676] px-[3px]">
      {tools.map((n) => (
        <button key={n} type="button" aria-label={n} className={clsx('flex size-6 items-center justify-center border border-[#7a7676]', n === 'manip' && 'bg-[#dcdcdc]')}>
          <Icon name={n} className="size-5" />
        </button>
      ))}
      <span className="h-1" />
      {layouts.map((n) => (
        <button key={n} type="button" aria-label={n} className="flex size-6 items-center justify-center">
          <Icon name={n} className="size-[22px]" />
        </button>
      ))}
      <div className="flex h-[23px] w-6 items-center justify-around border border-[#4b4949]">
        <svg viewBox="0 0 4 3" className="w-1"><path d="M0 0h4L2 2z" fill="#ccc" /></svg>
        <svg viewBox="0 0 4 3" className="w-1"><path d="M0 0h4L2 2z" fill="#ccc" /></svg>
      </div>
    </div>
    <div className="mb-1 flex size-[21px] items-center justify-center border border-[#8a8686] bg-[#2e2c2c]">
      <Icon name="maya" className="size-4" />
    </div>
  </aside>
);

const uvGroups = [
  { icons: [['uvGrid', 'uvSmooth', 'uvShell'], ['uvLattice', 'uvPick']], pressed: true },
  { icons: [['uvFlip', 'uvFlip2'], ['ccw', 'ccw']] },
  { icons: [['cut', 'sew'], ['unfold', 'moveSew']] },
  { icons: [['layout', 'uvGridW'], ['uvBlocks', 'straight']] },
  { icons: [['alignL', 'alignR'], ['alignB', 'alignT']] },
  { icons: [['iso', 'isoRed'], ['iso', 'uvGridW']] },
  { icons: [['image', 'checkDots'], ['imageBW']] },
  { icons: [['uvGridW', 'magnet', 'overlap'], ['overlap', 'rgb', 'white']] },
  { icons: [['bake', 'refresh'], ['bake2', 'paintUV']] },
];

const SHAPES = [
  '255,155 338,155 338,194 255,194',
  '302,211 384,211 384,261 332,261',
  '424,240 474,240 474,340 424,340',
  '317,517 376,517 376,616 317,616',
  '491,528 525,504 525,603 459,603 459,565 492,565',
  '190,348 202,348 202,360 190,360',
];
const OVERLAPPED = [
  '294,284 393,284 393,315 358,315 358,347 294,347',
  '295,400 325,389 325,422 354,422 354,488 295,488 295,455 262,455 279,405 295,420',
  '409,389 456,405 472,455 440,455 440,488 380,488 380,422 409,422',
];
const TRIANGLE = '332,262 279,405 491,527';

const UvCanvas = () => {
  const steps = Array.from({ length: 21 }, (_, i) => i - 10);
  return (
    <svg viewBox="95 155 468 479" preserveAspectRatio="xMinYMin slice" className="block h-full w-full bg-[#dfd0d0]">
      <defs>
        <clipPath id="uvTriangle"><polygon points={TRIANGLE} /></clipPath>
      </defs>
      <g stroke="#7d7474" strokeWidth=".7" opacity=".8">
        {steps.map((s) => <path key={s} d={`M95 ${373 + s * 9.8}H227.500`} />)}
        {steps.filter((s) => s > -4).map((s) => <path key={s} d={`M${128.5 + s * 9.8} 275V471`} />)}
      </g>
      <path d="M95 274.500H227.500V471.500H95" fill="none" stroke="#222" />
      <path d="M128.500 275V323M128.500 373V471M95 372.500H128M176 372.500H227" stroke="#2020d0" />
      <path d="M128.500 323V373" stroke="#50e840" />
      <path d="M128 372.500H176" stroke="#f03c3c" />
      <g fill="#8b8585" fontSize="7">
        <text x="129" y="272">1</text>
        {[0.9, 0.8, 0.7, 0.6, 0.5, 0.4, 0.3, 0.2, 0.1].map((v, i) => <text key={v} x="129" y={282 + i * 9.8}>{v}</text>)}
        {[0.1, 0.2, 0.3, 0.4, 0.5, 0.6, 0.7, 0.8, 0.9].map((v, i) => <text key={v} x="130" y={381 + i * 9.8}>-{v}</text>)}
        <text x="130" y="469">-1</text>
        <text x="95" y="371">.40.30.20.</text>
        <text x="129" y="371">0</text>
        <text x="138" y="371">0.10.20.30.40.50.60.70.80.91</text>
      </g>
      <g fill="#9391ff">
        {SHAPES.concat(OVERLAPPED).map((p) => <polygon key={p} points={p} />)}
        <polygon points={TRIANGLE} />
      </g>
      <g fill="#625fff" clipPath="url(#uvTriangle)">
        {OVERLAPPED.map((p) => <polygon key={p} points={p} />)}
      </g>
      <polygon points={TRIANGLE} fill="none" stroke="#f2cfdc" strokeWidth=".9" />
    </svg>
  );
};

const UvEditor = () => (
  <section className="flex min-w-0 flex-[469] flex-col">
    <Menu items={['Polygons', 'Subdivs', 'View', 'Select', 'Tool', 'Image', 'Textures', 'UV Sets', 'Panels']} className="h-[15px] gap-[10px] pl-[5px]" />
    <div className="flex h-[39px] shrink-0 pl-2 pt-px">
      {uvGroups.map((group, g) => (
        <React.Fragment key={g}>
          <div>
            {group.icons.map((row, r) => (
              <div key={r} className="flex">
                {row.map((n, i) => <ToolButton key={i} name={n} pressed={group.pressed} />)}
              </div>
            ))}
          </div>
          <Sep />
        </React.Fragment>
      ))}
      <div>
        <input aria-label="Value" defaultValue="1.247" className="block h-[14px] w-[27px] bg-[#333131] pl-[2px] text-[8px]" />
        <ToolButton name="copy" cell="mt-1 size-[18px]" />
      </div>
    </div>
    <div className="min-h-0 flex-1">
      <UvCanvas />
    </div>
  </section>
);

// Ground plane, projected from its far corner and two vanishing points
const project = (a: number, b: number) => {
  const w = 1 - 0.3 * a - 0.509 * b;
  const x = (800 - 0.3 * a * 148 - 0.509 * b * 1093) / w;
  const y = (333 - 0.3 * a * 217 - 0.509 * b * 236) / w;
  return `${x.toFixed(1)} ${y.toFixed(1)}`;
};

const ViewportCanvas = () => {
  const steps = Array.from({ length: 25 }, (_, i) => i / 24);
  return (
    <svg viewBox="566 129 463 505" preserveAspectRatio="xMinYMin slice" className="block h-full w-full bg-[#dfd0d0]">
      <defs>
        <pattern id="faceDots" width="3" height="3" patternUnits="userSpaceOnUse">
          <rect width="3" height="3" fill="#3a2a18" />
          <rect width="2" height="2" fill="#dca062" />
        </pattern>
      </defs>
      <g stroke="#8d8383" strokeWidth=".5" fill="none">
        {steps.map((s) => <path key={s} d={`M${project(s, 0)}L${project(s, 1)}M${project(0, s)}L${project(1, s)}`} />)}
      </g>
      <path d={`M${project(0, 0.5)}L${project(1, 0.5)}M${project(0.5, 0)}L${project(0.5, 1)}`} stroke="#111" strokeWidth="1.200" />
      <g stroke="#7fe8e4" strokeWidth=".8" strokeLinejoin="round">
        <path d="M769 389L779 391 815 370 870 382 894 363 914 350 908 420H769z" fill="#585454" />
        <path d="M870 382L894 363 914 350 908 420H869z" fill="#454343" />
        <path d="M815 370V420M870 382L869 420M894 363L890 420" fill="none" />
        <path d="M902 289L919 291 899 300z" fill="#6b6767" />
        <path d="M899 300L919 291 914 350 894 363z" fill="#484545" />
        <path d="M874 311L899 300 894 363 870 382z" fill="#4a4747" />
        <path d="M799 225L846 228 905 230 877 260 797 272 744 267z" fill="#676363" />
        <path d="M877 260L905 230 899 300 874 311z" fill="#434141" />
        <path d="M797 272L817 304 815 370 779 391z" fill="#3e3c3c" />
        <path d="M744 267L797 272 779 391 728 377z" fill="#736f6f" />
        <path d="M877 260L874 311 817 304z" fill="#625e5e" />
        <path d="M817 304L874 311 870 382 815 370z" fill="#625e5e" />
        <path d="M797 272L877 260 817 303z" fill="url(#faceDots)" />
        <path d="M846 228L797 272" fill="none" />
      </g>
      <g strokeWidth="1.200" fill="none">
        <path d="M578 610L583 601M580 598l3 3 2-4" stroke="#40c840" />
        <path d="M578 610L573 606M571 605h4l-4 5h4" stroke="#3858e0" />
        <path d="M578 610L581 617M576 613l6 4M581 612l-4 6" stroke="#e04040" />
      </g>
    </svg>
  );
};

const panelTools = [
  ['camera', 'camera', 'bookmark', 'imgPlane', 'pin'],
  ['pGrid', 'film', 'resGate', 'maskGate', 'fieldChart', 'safe', 'safeT'],
  ['wire', 'shaded', 'shaded2', 'checkBall', 'ballY', 'ballW', 'ballG'],
  ['isolate'],
  ['xray', 'xrayJ', 'share'],
];

const Viewport = () => (
  <section className="flex min-w-0 flex-[465] flex-col border-l-2 border-t border-[#3a3838] border-t-[#aaa6a6]">
    <Menu items={['View', 'Shading', 'Lighting', 'Show', 'Renderer', 'Panels']} dim="Shading" className="h-[13px] gap-[10px] pl-[5px]" />
    <div className="flex h-[14px] shrink-0 items-center pl-[6px]">
      {panelTools.map((group, g) => (
        <React.Fragment key={g}>
          {g > 0 && <Sep className="w-[7px]" />}
          {group.map((n, i) => <ToolButton key={i} name={n} cell="size-[14px]" className="size-[11px]" />)}
        </React.Fragment>
      ))}
    </div>
    <div className="min-h-0 flex-1">
      <ViewportCanvas />
    </div>
  </section>
);

const inputs = ['polyCloseBorder1', 'deleteComponent1', 'polyTweakUV2', 'polyMapCut2', 'polyTweakUV1', 'polyMapCut1'];

const ChannelBox = () => (
  <section className="flex w-[174px] shrink-0 flex-col pl-[7px] pr-[5px]">
    <header className="flex h-[14px] shrink-0 items-center gap-px">
      <span className="flex-1 text-center">Channel Box / Layer Editor</span>
      <button type="button" aria-label="Float" className="size-[9px] border border-[#222] bg-[#474545] p-px"><svg viewBox="0 0 8 8"><path d="M3 1h4v4M1 3h4v4H1z" fill="none" stroke="#111" strokeWidth="1.500" /></svg></button>
      <button type="button" aria-label="Close panel" className="size-[9px] border border-[#222] bg-[#474545] p-px"><svg viewBox="0 0 8 8"><path d="M1 1l6 6M7 1L1 7" stroke="#111" strokeWidth="1.500" /></svg></button>
    </header>
    <div className="flex h-[14px] shrink-0 items-center justify-end gap-1 pr-px">
      <Icon name="axes" className="size-[11px]" />
      <Icon name="half" className="size-[11px]" />
      <Icon name="arrowNE" className="size-[11px]" />
    </div>
    <Menu items={['Channels', 'Edit', 'Object', 'Show']} className="h-[15px] gap-[10px] pl-1" />
    <div className="mt-px flex min-h-0 flex-1 flex-col border border-[#454343] bg-[#3a3838]">
      <ul className="h-[99px] bg-[#5d5a5a] pl-px text-[8px] font-bold leading-[11px]">
        <li>pCubeShape1</li>
        <li>INPUTS</li>
        {inputs.map((name) => <li key={name} className="pl-[6px]">{name}</li>)}
      </ul>
    </div>
    <div className="my-[4px] h-[3px] w-[55px] shrink-0 self-center border-y border-dotted border-[#413f3f]" />
    <div className="flex h-[13px] shrink-0">
      <button type="button" className="bg-[#8a8686] px-[6px]">Display</button>
      <button type="button" className="border-r border-[#454343] px-[9px]">Render</button>
      <button type="button" className="border-r border-[#454343] px-[9px]">Anim</button>
    </div>
    <div className="flex h-[151px] shrink-0 flex-col border-r border-t border-[#454343] border-t-[#8a8686] px-[3px]">
      <Menu items={['Layers', 'Options', 'Help']} className="h-[15px] gap-[10px] pl-[2px]" />
      <div className="flex h-[18px] shrink-0 items-start justify-end gap-1">
        {['layUp', 'layDown', 'layNew', 'layNewSel'].map((n) => <Icon key={n} name={n} className="size-[13px]" />)}
      </div>
      <div className="mb-1 flex flex-1 flex-col justify-end bg-[#3a3838]">
        <div className="flex h-[10px] items-center gap-px">
          <button type="button" aria-label="Left" className="flex h-[9px] w-[9px] items-center justify-center bg-[#6b6767]"><svg viewBox="0 0 4 6" className="h-[5px]"><path d="M4 0v6L0 3z" fill="#eee" /></svg></button>
          <span className="ml-px flex h-[9px] w-[78px] items-center justify-center bg-[#858181]"><span className="h-[5px] w-3 border-y border-dotted border-[#3a3838]" /></span>
          <span className="h-[9px] flex-1 bg-[#454343]" />
          <button type="button" aria-label="Scroll left" className="flex h-[9px] w-[10px] items-center justify-center bg-[#6b6767]"><svg viewBox="0 0 4 6" className="h-[5px]"><path d="M4 0v6L0 3z" fill="#eee" /></svg></button>
          <button type="button" aria-label="Scroll right" className="flex h-[9px] w-[10px] items-center justify-center bg-[#6b6767]"><svg viewBox="0 0 4 6" className="h-[5px]"><path d="M0 0v6l4-3z" fill="#eee" /></svg></button>
        </div>
      </div>
    </div>
  </section>
);

const SideTabs = () => (
  <div className="flex w-[13px] shrink-0 flex-col items-start pt-[2px]">
    <button type="button" className="h-14 w-3 border-b border-[#454343] leading-3 [writing-mode:vertical-rl]">Tool Settings</button>
    <button type="button" className="h-[103px] w-3 bg-[#8a8686] leading-3 [writing-mode:vertical-rl]">Channel Box / Layer Editor</button>
    <button type="button" className="h-[68px] w-3 border-b border-l border-[#454343] leading-3 [writing-mode:vertical-rl]">Attribute Editor</button>
  </div>
);

const LAST_NUMBERED_FRAME = 14;

const TimeSlider = () => (
  <div className="flex h-[25px] shrink-0 items-center border-t border-[#454343]">
    <div className="ml-[10px] flex h-[21px] flex-1 bg-[#a09a9a] pl-1">
      {Array.from({ length: 24 }, (_, i) => i + 1).map((frame) => (
        <div key={frame} className={clsx('grid flex-1 grid-cols-1 text-[#1e1c1c]', frame === 1 && 'bg-[#878282]')}>
          <span className="col-start-1 row-start-1 mt-[10px] h-[10px] w-px bg-[#1e1c1c]" />
          {frame <= LAST_NUMBERED_FRAME && (
            <span className="col-start-1 row-start-1 pl-[7px] text-[7px] leading-[9px]">
              {frame}
              {frame === 1 && <b className="block text-white">1</b>}
            </span>
          )}
        </div>
      ))}
    </div>
    <input aria-label="Current time" defaultValue="1.00" className="ml-1 mr-1 h-[13px] w-[46px] bg-[#3a3838] pl-[2px]" />
    <div className="flex justify-around pr-[3px]">
      {['toStart', 'stepBack', 'keyBack', 'playBack', 'play', 'keyFwd', 'stepFwd', 'toEnd'].map((n) => (
        <ToolButton key={n} name={n} cell="h-[18px] w-[19px]" className="size-3" />
      ))}
    </div>
  </div>
);

const PlainSelect: React.FC<{ label: string; value: string; width: string }> = ({ label, value, width }) => (
  <span className="flex items-center gap-2">
    <svg viewBox="0 0 6 4" className="w-[6px]"><path d="M0 0h6L3 4z" fill="none" stroke="#ccc" strokeWidth=".8" /></svg>
    <select aria-label={label} className={clsx('h-[13px] appearance-none border border-[#504d4d] pl-px', width)}>
      <option>{value}</option>
    </select>
  </span>
);

const RangeSlider = () => (
  <div className="flex h-[21px] shrink-0 items-center border-t border-[#454343] pl-[10px] pr-1">
    <input aria-label="Range start" defaultValue="1.00" className="mr-[3px] h-[13px] w-[46px] bg-[#3a3838] pl-[2px]" />
    <input aria-label="Playback start" defaultValue="1.00" className="mr-[3px] h-[13px] w-[47px] bg-[#3a3838] pl-[2px]" />
    <div className="flex h-[13px] flex-1 bg-[#333131] pl-1">
      <div className="flex w-1/2 items-center justify-between border border-[#9a9696] bg-[#837f7f] px-[3px]">
        <span className="flex items-end gap-[3px]"><span className="h-[7px] w-[6px] border-b border-r border-[#2e2c2c]" />1</span>
        <span className="flex items-end gap-[3px]">24<span className="h-[7px] w-[6px] border-b border-r border-[#2e2c2c]" /></span>
      </div>
    </div>
    <input aria-label="Playback end" defaultValue="24.00" className="ml-[3px] h-[13px] w-[47px] bg-[#3a3838] pl-[2px]" />
    <input aria-label="Range end" defaultValue="48.00" className="ml-[3px] mr-[3px] h-[13px] w-[47px] bg-[#3a3838] pl-[2px]" />
    <PlainSelect label="Animation layer" value="No Anim Layer" width="w-[67px]" />
    <span className="w-1" />
    <PlainSelect label="Character set" value="No Character Set" width="w-[66px]" />
    <Icon name="key" className="ml-1 mr-1 size-3" />
    <Icon name="autoKey" className="size-[11px]" />
  </div>
);

const CommandLine = () => (
  <div className="flex h-[21px] shrink-0 items-center border-t border-[#454343] pl-4 pr-1">
    <label htmlFor="mel" className="w-[25px]">MEL</label>
    <input id="mel" className="h-[15px] min-w-0 flex-1 bg-[#3a3838]" />
    <span className="ml-[6px] h-[15px] min-w-0 flex-1 bg-black" />
    <Icon name="script" className="ml-[3px] size-[11px]" />
  </div>
);

const createUvItems: { text: string; mark?: 'box' | 'arrow' }[][] = [
  [
    { text: 'Planar Mapping', mark: 'box' },
    { text: 'Cylindrical Mapping', mark: 'box' },
    { text: 'Spherical Mapping', mark: 'box' },
    { text: 'Automatic Mapping', mark: 'box' },
    { text: 'Create UVs Based On Camera', mark: 'box' },
    { text: 'Best Plane Texturing Tool' },
  ],
  [
    { text: 'Create Empty UV Set', mark: 'box' },
    { text: 'Copy UVs to UV Set', mark: 'arrow' },
    { text: 'Set Current UV Set...' },
    { text: 'Rename Current UV Set...' },
    { text: 'Delete Current UV Set' },
    { text: 'UV Set Editor' },
    { text: 'Per Instance Sharing', mark: 'arrow' },
  ],
];

const MenuRows: React.FC<{ items: { text: string; mark?: 'box' | 'arrow' }[] }> = ({ items }) => (
  <>
    {items.map((item) => (
      <button key={item.text} type="button" className="flex h-[13px] w-full items-center pl-4 pr-[6px]">
        {item.text}
        {item.mark === 'box' && <span className="ml-auto size-[6px] border border-[#eee]" />}
        {item.mark === 'arrow' && <svg viewBox="0 0 3 4" className="ml-auto mr-[2px] h-1 w-[3px]"><path d="M0 0v4l3-2z" fill="#eee" /></svg>}
      </button>
    ))}
  </>
);

const CreateUvsWindow = () => (
  <div className="absolute left-[557px] top-[132px] w-[163px] border border-[#6f8298] bg-[#d4e4f7] px-1 pb-[3px] shadow-md">
    <div className="flex h-4 items-center justify-between text-[8px] text-[#222]">
      Create UVs
      <button type="button" aria-label="Close menu" className="flex size-[9px] items-center justify-center border border-[#8da3bb]">
        <svg viewBox="0 0 8 8" className="w-[5px]"><path d="M1 1l6 6M7 1L1 7" stroke="#445" strokeWidth="1.500" /></svg>
      </button>
    </div>
    <div className="border border-[#26262a] bg-[#5b5959] py-px">
      <MenuRows items={createUvItems[0]} />
      <hr className="mx-1 mt-px border-[#444242]" />
      <label className="flex h-[13px] items-center gap-[3px] pl-1">
        <input type="checkbox" className="size-[9px] appearance-none bg-[#333131]" />
        Assign Shader to Each Projection
      </label>
      <hr className="mx-1 border-[#444242]" />
      <MenuRows items={createUvItems[1]} />
    </div>
  </div>
);

const Radio: React.FC<{ name: string; label: string; checked?: boolean }> = ({ name, label, checked }) => (
  <label className="flex h-[12px] items-center gap-[5px]">
    <input type="radio" name={name} defaultChecked={checked} className="size-[6px] appearance-none rounded-full bg-[#383636] checked:bg-white" />
    {label}
  </label>
);

const Check: React.FC<{ label: string; checked?: boolean }> = ({ label, checked }) => (
  <label className="flex h-[13px] items-center gap-[3px]">
    <span className="grid">
      <input type="checkbox" defaultChecked={checked} className="peer col-start-1 row-start-1 size-[9px] appearance-none bg-[#333131]" />
      <svg viewBox="0 0 9 9" className="pointer-events-none invisible col-start-1 row-start-1 size-[9px] peer-checked:visible">
        <path d="M1.500 5l2 2.500L8 1.500" fill="none" stroke="#fff" strokeWidth="1.500" />
      </svg>
    </span>
    {label}
  </label>
);

const SectionTitle: React.FC<{ children: React.ReactNode }> = ({ children }) => (
  <h2 className="h-[13px] border-b border-[#333131] bg-[#6a6767] pl-[6px] text-[8px] font-bold leading-[12px]">{children}</h2>
);

const PlanarDialog = () => (
  <div className="absolute left-[620px] top-[399px] w-[386px] rounded-md border border-[#1e2a38] bg-gradient-to-b from-[#c3d7ee] to-[#a9c4e2] px-[5px] pb-1 shadow-lg shadow-black/40">
    <div className="flex h-[18px] items-center gap-[5px] bg-[linear-gradient(90deg,transparent_36%,#5f758e_40%,#7189a3_52%,#56697f_58%,#40536a_68%,transparent_76%)] text-[8px] text-[#222]">
      <Icon name="logo" className="size-[9px]" />
      <span className="flex-1">Planar Mapping Options</span>
      <div className="-mr-px flex h-3 self-start">
        <button type="button" aria-label="Minimize" className="flex w-[19px] items-center justify-center border border-[#7f95ae] bg-[#c9dbee]"><svg viewBox="0 0 8 4" className="w-2"><path d="M0 0h8v3H0z" fill="#fff" stroke="#345" /></svg></button>
        <button type="button" aria-label="Maximize" className="flex w-[18px] items-center justify-center border border-[#7f95ae] bg-[#c9dbee]"><svg viewBox="0 0 8 7" className="w-2"><path d="M.5.5h7v6h-7zM3 3h2v1.500H3z" fill="#fff" stroke="#345" /></svg></button>
        <button type="button" aria-label="Close window" className="flex w-[31px] items-center justify-center rounded-br bg-gradient-to-b from-[#e89080] to-[#d8301c]"><svg viewBox="0 0 8 8" className="w-[7px]"><path d="M1 1l6 6M7 1L1 7" stroke="#fff" strokeWidth="2" /></svg></button>
      </div>
    </div>
    <div className="border border-[#26303c] bg-[#5b5959]">
      <Menu items={['Edit', 'Help']} className="h-[14px] gap-[10px] pl-[5px]" />
      <div className="mx-1 border-t border-[#7a7676] pt-[3px]">
        <div className="border border-[#464444]">
          <SectionTitle>Projection Manipulator</SectionTitle>
          <div className="grid grid-cols-[96px_1fr] gap-x-[6px] gap-y-[6px] pb-px pt-[5px]">
            <span className="text-right leading-3">Fit projection to:</span>
            <div>
              <Radio name="fit" label="Best plane" />
              <Radio name="fit" label="Bounding box" checked />
            </div>
            <span className="text-right leading-3">Project from:</span>
            <div>
              <Radio name="axis" label="X axis" />
              <Radio name="axis" label="Y axis" checked />
              <Radio name="axis" label="Z axis" />
              <Radio name="axis" label="Camera" />
            </div>
            <div className="col-start-2">
              <Check label="Keep image width/height ratio" checked />
              <Check label="Insert projection before deformers" checked />
            </div>
          </div>
        </div>
        <div className="mt-1 border border-[#464444]">
          <SectionTitle>UV Set</SectionTitle>
          <div className="grid grid-cols-[96px_1fr] gap-x-[6px] pb-1 pr-1 pt-[5px]">
            <div className="col-start-2"><Check label="Create new UV Set" /></div>
            <label htmlFor="uvset" className="text-right leading-[14px] text-[#8a8686]">UV Set name:</label>
            <input id="uvset" defaultValue="uvSet1" disabled className="h-[14px] border border-[#6b6868] pl-[2px] text-[#7b7878]" />
          </div>
        </div>
      </div>
      <div className="mt-[10px] grid grid-cols-3 gap-[3px] border-t border-[#504e4e] px-1 pb-1 pt-[3px]">
        {['Project', 'Apply', 'Close'].map((text) => (
          <button key={text} type="button" className={clsx('h-[18px] border', text === 'Apply' ? 'border-[#8fa9c4] bg-[#657080]' : 'border-[#7a7676] bg-[#6d6969]')}>
            {text}
          </button>
        ))}
      </div>
    </div>
  </div>
);

export default function App() {
  return (
    <div className="relative h-screen overflow-hidden bg-black px-[63px] font-['Open_Sans',sans-serif] text-[7px] text-[#ececec]">
      <div className="flex h-full flex-col bg-[#5b5959]">
        <header className="flex h-[15px] shrink-0 items-center gap-[3px] bg-gradient-to-r from-[#cfe2f6] via-[#dcefff] to-[#bcd9f4] pl-[2px] text-[8px] text-[#1e2a3a]">
          <Icon name="logo" className="size-[9px]" />
          <span className="whitespace-pre">Autodesk Maya 2012 Hotfix 4 x64 - Student Version: untitled*   ---   pCube1.f[32]</span>
          <div className="ml-auto flex h-full items-start pr-1">
            <button type="button" aria-label="Minimize" className="flex h-3 w-[18px] items-center justify-center border-l border-[#9fb8d0]"><svg viewBox="0 0 8 4" className="w-2"><path d="M.5.5h7v2.500h-7z" fill="#fff" stroke="#456" /></svg></button>
            <button type="button" aria-label="Restore" className="flex h-3 w-[18px] items-center justify-center"><svg viewBox="0 0 9 9" className="w-2"><path d="M3 1h5v5M1 3h5v5H1z" fill="none" stroke="#456" /></svg></button>
            <button type="button" aria-label="Close" className="flex h-3 w-[30px] items-center justify-center border-l border-[#9fb8d0]"><svg viewBox="0 0 8 8" className="w-2"><path d="M1 1l6 6M7 1L1 7" stroke="#456" strokeWidth="2.500" /><path d="M1 1l6 6M7 1L1 7" stroke="#fff" /></svg></button>
          </div>
        </header>
        <Menu
          items={['File', 'Edit', 'Modify', 'Create', 'Display', 'Window', 'Assets', 'Select', 'Mesh', 'Edit Mesh', 'Proxy', 'Normals', 'Color', 'Create UVs', 'Edit UVs', 'Muscle', 'OpenFlight', 'PhysX', 'Help']}
          className="h-[14px] gap-[10px] border-b border-[#434141] pl-[6px]"
        />
        <StatusLine />
        <Shelf />
        <main className="flex min-h-0 flex-1 pb-[2px]">
          <ToolBox />
          <UvEditor />
          <Viewport />
          <ChannelBox />
          <SideTabs />
        </main>
        <TimeSlider />
        <RangeSlider />
        <CommandLine />
        <footer className="flex h-[18px] shrink-0 items-center border-t border-[#454343] pl-[9px] pr-[3px]">
          <span className="h-[15px] flex-1 border border-[#454343] pl-2 leading-[14px]">Show Manipulator Tool: Select an object.</span>
        </footer>
      </div>
      <CreateUvsWindow />
      <PlanarDialog />
      <svg viewBox="0 0 10 16" className="pointer-events-none absolute left-[826px] top-[641px] h-4 w-[10px]">
        <path d="M1 1v12l3-3 2 5 2-1-2-4.500h4z" fill="#fff" stroke="#111" strokeWidth=".8" />
      </svg>
    </div>
  );
}
